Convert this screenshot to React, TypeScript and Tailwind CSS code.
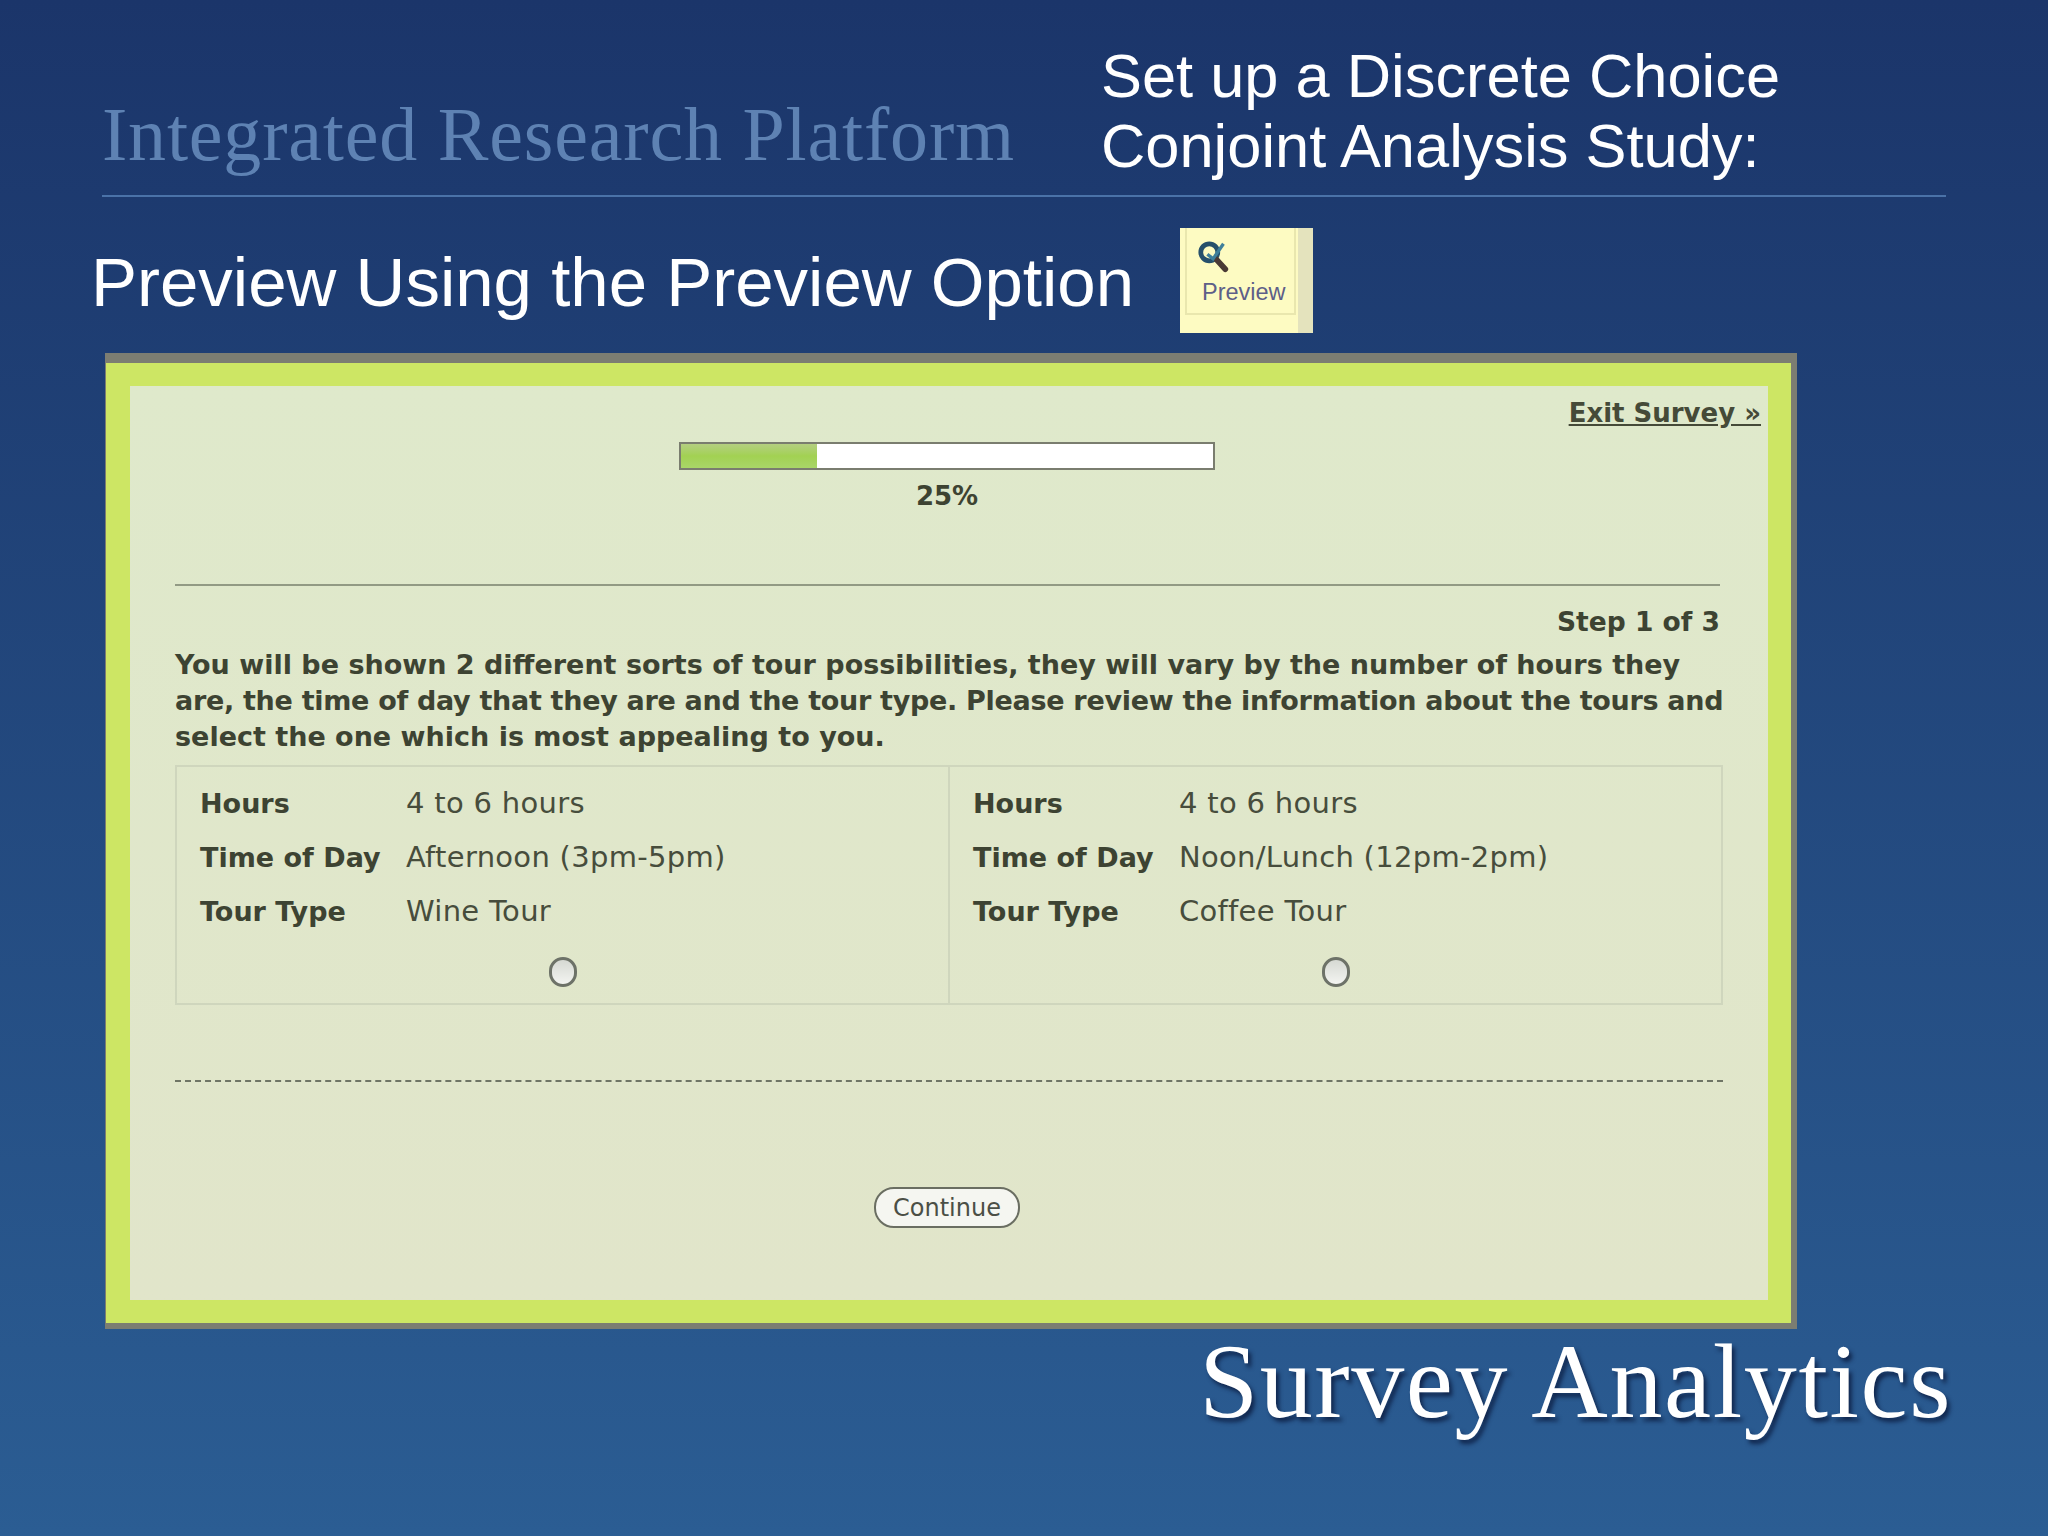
const sans = "font-['Liberation_Sans',Arial,sans-serif]";
const brand = "font-['Liberation_Serif','Times_New_Roman',serif]";
const ui = "font-['DejaVu_Sans',Verdana,sans-serif]";

const options = [
  { hours: '4 to 6 hours', time: 'Afternoon (3pm-5pm)', tour: 'Wine Tour' },
  { hours: '4 to 6 hours', time: 'Noon/Lunch (12pm-2pm)', tour: 'Coffee Tour' },
];

function PreviewBadge() {
  return (
    <div className="w-[133px] h-[105px] bg-[#fdfbc2] shrink-0 flex">
      <div className="ml-[5px] w-[111px] h-[87px] border-l-2 border-r-2 border-b-2 border-[#e9e7ae] pl-[10px] pt-[12px]">
        <svg width="34" height="34" viewBox="0 0 36 36" fill="none">
          <circle cx="13" cy="13" r="9" stroke="#26506b" strokeWidth="5" />
          <path d="M20 20 L30 31" stroke="#4a3a35" strokeWidth="6" strokeLinecap="round" />
          <path d="M11 15 L17 20 L28 4" stroke="#3f7f9a" strokeWidth="3.5" />
        </svg>
        <div className={`${sans} text-[23.5px] leading-[30px] mt-[3px] ml-[5px] text-[#5e5f88]`}>Preview</div>
      </div>
      <div className="ml-auto w-[15px] h-full bg-[#e4e3bd]" />
    </div>
  );
}

function OptionCell({ option, last }: { option: (typeof options)[0]; last: boolean }) {
  const rows = [
    ['Hours', option.hours],
    ['Time of Day', option.time],
    ['Tour Type', option.tour],
  ];

  return (
    <div className={`flex-1 pl-[23px] pt-[10px] ${last ? '' : 'border-r-2 border-[#cfd6bd]'}`}>
      {rows.map(([label, value]) => (
        <div key={label} className="flex h-[54px] items-center">
          <div className="w-[206px] font-bold text-[#3d4332]">{label}</div>
          <div className="text-[29px] tracking-[0.3px] text-[#474d3c]">{value}</div>
        </div>
      ))}
      <div className="flex justify-center pr-[23px] mt-[18px]">
        <div className="w-[28px] h-[30px] rounded-full border-[3px] border-[#6d7268] bg-gradient-to-b from-[#d6d9d3] to-[#f3f4f1]" />
      </div>
    </div>
  );
}

export default function App() {
  return (
    <div className="w-[2048px] h-[1536px] overflow-hidden flex flex-col bg-gradient-to-b from-[#1b356a] to-[#2b5d93]">
      <header className="ml-[102px] w-[1844px] h-[197px] flex border-b-2 border-[#4a72a8]">
        <div className={`${brand} w-[999px] pt-[90px] text-[76px] leading-[88px] tracking-[0.8px] whitespace-nowrap text-[#5e82b3]`}>
          Integrated Research Platform
        </div>
        <div className={`${sans} pt-[41px] text-[61.4px] leading-[70px] whitespace-nowrap text-white`}>
          Set up a Discrete Choice
          <br />
          Conjoint Analysis Study:
        </div>
      </header>

      <div className="ml-[91px] mt-[31px] flex items-center">
        <h1 className={`${sans} w-[1089px] pt-[5px] text-[69px] leading-[80px] whitespace-nowrap text-white`}>
          Preview Using the Preview Option
        </h1>
        <PreviewBadge />
      </div>

      <main className="ml-[105px] mt-[20px] w-[1692px] h-[976px] shrink-0 border-t-[10px] border-r-[6px] border-b-[6px] border-l-[1px] border-[#7c7d72] bg-[#cde664] pl-[24px] pr-[23px] pt-[23px] pb-[23px]">
        <div className={`${ui} h-full bg-gradient-to-b from-[#dfe9cb] to-[#e1e5ca] text-[#3d4332] text-[27px] flex flex-col`}>
          <div className="flex justify-end pr-[7px] pt-[8px]">
            <a className="font-bold text-[26px] leading-[38px] underline text-[#454a38]">Exit Survey »</a>
          </div>

          <div className="pl-[45px] pr-[45px]">
            <div className="flex justify-center pr-[4px] mt-[10px]">
              <div className="w-[536px] h-[28px] border-2 border-[#7a7d6f] bg-white">
                <div className="w-[25.5%] h-full bg-gradient-to-b from-[#b4cf80] via-[#a2d152] to-[#a9d668]" />
              </div>
            </div>
            <div className="text-center pr-[4px] text-[26px] font-bold leading-[38px] mt-[7px]">25%</div>
            <div className="mt-[69px] mr-[3px] h-[2px] bg-[#929a84]" />
            <div className="text-right text-[26.5px] pr-[3px] font-bold leading-[36px] mt-[18px]">Step 1 of 3</div>
            <p className="font-bold leading-[36px] mt-[7px] whitespace-nowrap text-[#3d4332]">
              You will be shown 2 different sorts of tour possibilities, they will vary by the number of hours they
              <br />
              <span className="tracking-[-0.3px]">
                are, the time of day that they are and the tour type. Please review the information about the tours and
              </span>
              <br />
              select the one which is most appealing to you.
            </p>
            <div className="flex h-[240px] mt-[10px] border-2 border-[#cfd6bd]">
              {options.map((option, index) => (
                <OptionCell key={option.tour} option={option} last={index === options.length - 1} />
              ))}
            </div>
            <div className="mt-[75px] border-t-2 border-dashed border-[#6f7565]" />
            <div className="flex justify-center pr-[4px] mt-[105px]">
              <button className="w-[146px] h-[41px] rounded-[20px] border-2 border-[#6a6e62] bg-[#f5f6f1] text-[24px] leading-[36px] text-[#4b4f46]">
                Continue
              </button>
            </div>
          </div>
        </div>
      </main>

      <div className={`${brand} flex justify-end pr-[96px] text-[106px] leading-[106px] tracking-[1.6px] whitespace-nowrap text-white [text-shadow:3px_4px_4px_rgba(10,25,60,0.8)]`}>
        Survey Analytics
      </div>
    </div>
  );
}
